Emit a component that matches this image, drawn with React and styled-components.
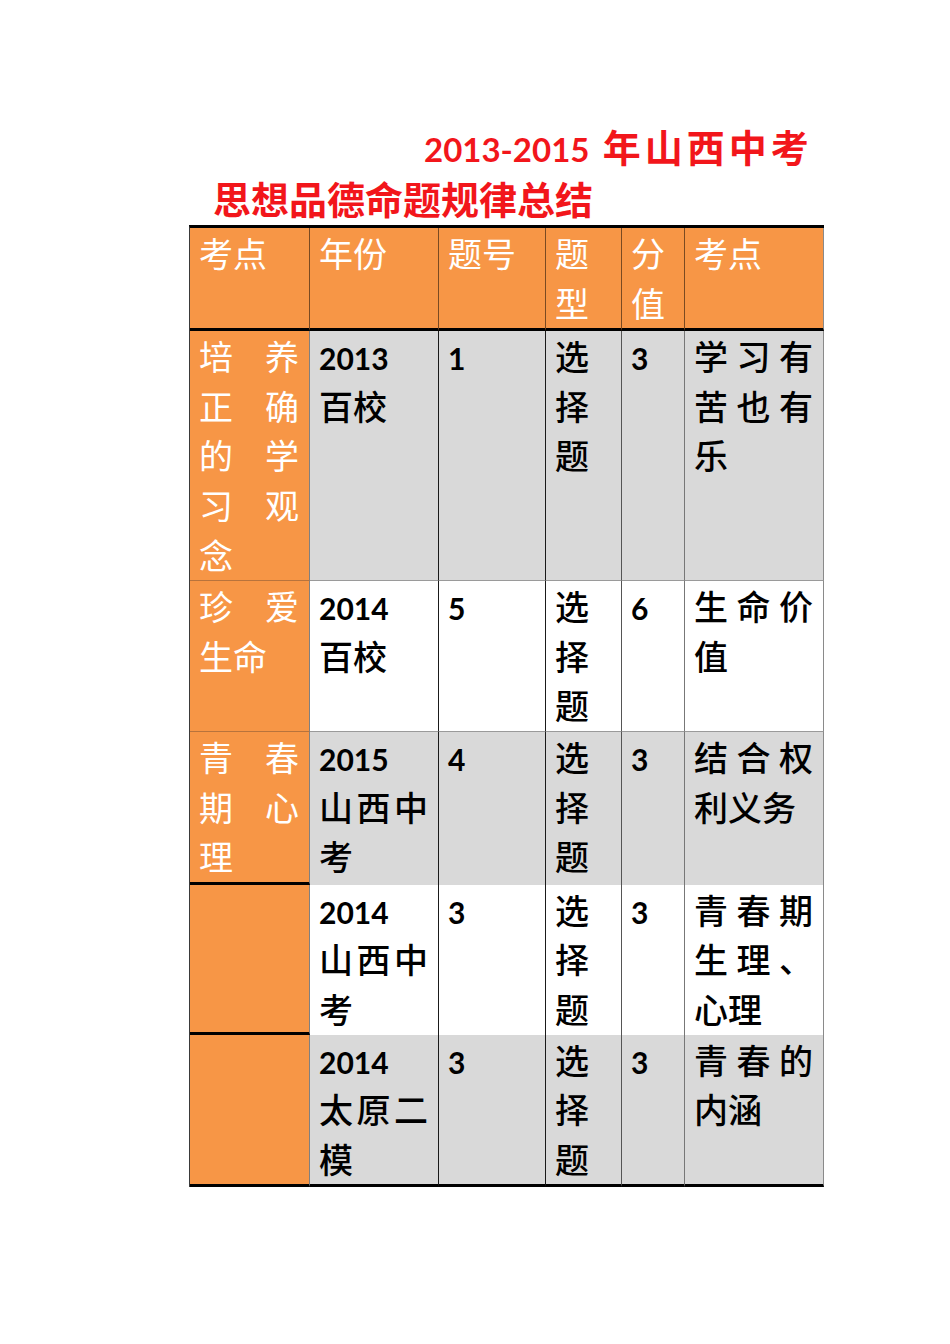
import React from "react";
import styled, { createGlobalStyle } from "styled-components";

const GlobalStyle = createGlobalStyle`
  html, body {
    margin: 0;
    padding: 0;
    background: #ffffff;
  }
  body {
    font-family: "Lato", "Noto Sans CJK SC", sans-serif;
  }
`;

const ORANGE = "#f79646";
const GRAY = "#d9d9d9";

const colWidths = [120, 129, 107, 76, 63, 139];
const colLines = ["#808080", "#1a1a1a", "#1a1a1a", "#555555", "#777777", "#8a8a8a"];

const headers = ["考点", "年份", "题号", "题型", "分值", "考点"];

const rows = [
  { topic: "培养正确的学习观念", year: "2013", src: "百校", no: "1", type: "选择题", score: "3", point: "学习有苦也有乐", shade: true, line: "thin" },
  { topic: "珍爱生命", year: "2014", src: "百校", no: "5", type: "选择题", score: "6", point: "生命价值", shade: false, line: "thin" },
  { topic: "青春期心理", year: "2015", src: "山西中考", no: "4", type: "选择题", score: "3", point: "结合权利义务", shade: true, line: "none" },
  { topic: "", year: "2014", src: "山西中考", no: "3", type: "选择题", score: "3", point: "青春期生理、心理", shade: false, line: "none" },
  { topic: "", year: "2014", src: "太原二模", no: "3", type: "选择题", score: "3", point: "青春的内涵", shade: true, line: "end" },
];

const Page = styled.div`
  padding: 121px 0 0 189px;
`;

const Title = styled.h1`
  margin: 0;
  color: #f2161b;
  font-family: "Lato", "Noto Sans CJK SC", sans-serif;
  font-size: 38px;
  font-weight: 700;
  line-height: 52px;
`;

const TitleLine = styled.span`
  display: block;
  padding-left: ${(p) => p.$indent}px;
  letter-spacing: ${(p) => p.$spacing || 0}px;
  white-space: nowrap;
`;

const Num = styled.span`
  font-family: "Lato", sans-serif;
  font-weight: 700;
  font-size: ${(p) => p.$size || 30}px;
  line-height: 1;
  letter-spacing: 0;
`;

const Table = styled.table`
  border-collapse: separate;
  border-spacing: 0;
  table-layout: fixed;
  width: 635px;
  border-top: 3px solid #000;
  border-left: 1px solid #3a3a3a;
`;

const Cell = styled.td`
  box-sizing: border-box;
  vertical-align: top;
  padding: 1px 10px 0 9px;
  font-size: 34px;
  line-height: 49.6px;
  text-align: justify;
  word-break: normal;
  line-break: strict;
  border-right: 1px solid ${(p) => colLines[p.$col]};
`;

const HeadCell = styled(Cell).attrs({ as: "th" })`
  background: ${ORANGE};
  color: #ffffff;
  font-weight: 400;
  border-right-color: ${(p) => (p.$col === 5 ? "#8a8a8a" : "#7a4a22")};
  border-bottom: 3px solid #000;
`;

const bottomBorder = (line, isTopic) => {
  if (line === "end") return "3px solid #000";
  if (line === "thin") return `1px solid ${isTopic ? "#b8733c" : "#9a9a9a"}`;
  return isTopic ? "3px solid #000" : "0";
};

const BodyCell = styled(Cell)`
  background: ${(p) => (p.$col === 0 ? ORANGE : p.$shade ? GRAY : "#ffffff")};
  color: ${(p) => (p.$col === 0 ? "#ffffff" : "#000000")};
  font-weight: ${(p) => (p.$col === 0 ? 400 : 500)};
  border-bottom: ${(p) => bottomBorder(p.$line, p.$col === 0)};
`;

export default function App() {
  return (
    <>
      <GlobalStyle />
      <Page>
        <Title>
          <TitleLine $indent={235} $spacing={4}>
            <Num $size={33}>2013-2015</Num> 年山西中考
          </TitleLine>
          <TitleLine $indent={24}>思想品德命题规律总结</TitleLine>
        </Title>
        <Table>
          <colgroup>
            {colWidths.map((w, i) => (
              <col key={i} style={{ width: w }} />
            ))}
          </colgroup>
          <thead>
            <tr>
              {headers.map((h, i) => (
                <HeadCell key={i} $col={i}>
                  {h}
                </HeadCell>
              ))}
            </tr>
          </thead>
          <tbody>
            {rows.map((r, idx) => (
              <tr key={idx}>
                <BodyCell $col={0} $shade={r.shade} $line={r.line}>
                  {r.topic}
                </BodyCell>
                <BodyCell $col={1} $shade={r.shade} $line={r.line}>
                  <Num>{r.year}</Num>
                  <br />
                  {r.src}
                </BodyCell>
                <BodyCell $col={2} $shade={r.shade} $line={r.line}>
                  <Num>{r.no}</Num>
                </BodyCell>
                <BodyCell $col={3} $shade={r.shade} $line={r.line}>
                  {r.type}
                </BodyCell>
                <BodyCell $col={4} $shade={r.shade} $line={r.line}>
                  <Num>{r.score}</Num>
                </BodyCell>
                <BodyCell $col={5} $shade={r.shade} $line={r.line}>
                  {r.point}
                </BodyCell>
              </tr>
            ))}
          </tbody>
        </Table>
      </Page>
    </>
  );
}
